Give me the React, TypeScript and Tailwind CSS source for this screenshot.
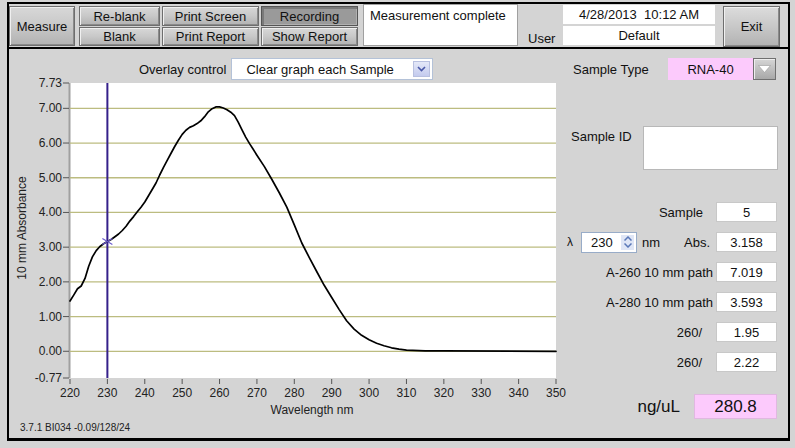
import React from "react";

const DATA: [number, number][] = [
  [220, 1.45], [221, 1.62], [222, 1.8], [223, 1.88], [224, 2.1], [225, 2.45], [226, 2.72], [227, 2.9],
  [228, 3.02], [229, 3.1], [230, 3.16], [231, 3.22], [232, 3.3], [233, 3.38], [234, 3.48], [235, 3.6],
  [236, 3.75], [237, 3.88], [238, 4.02], [239, 4.15], [240, 4.3], [241, 4.48], [242, 4.66], [243, 4.85],
  [244, 5.08], [245, 5.3], [246, 5.5], [247, 5.7], [248, 5.9], [249, 6.08], [250, 6.25], [251, 6.37],
  [252, 6.45], [253, 6.5], [254, 6.56], [255, 6.64], [256, 6.76], [257, 6.9], [258, 6.99], [259, 7.04],
  [260, 7.04], [261, 7.01], [262, 6.96], [263, 6.89], [264, 6.79], [265, 6.6], [266, 6.38], [267, 6.17],
  [268, 5.99], [269, 5.82], [270, 5.65], [272, 5.32], [274, 4.95], [276, 4.56], [278, 4.15], [280, 3.64],
  [282, 3.12], [284, 2.7], [286, 2.3], [288, 1.9], [290, 1.55], [292, 1.2], [294, 0.88], [296, 0.64],
  [298, 0.46], [300, 0.33], [302, 0.23], [304, 0.16], [306, 0.1], [308, 0.06], [310, 0.035], [315, 0.015],
  [320, 0.01], [350, 0.0],
];

const X0 = 61;
const X1 = 547;
const Y0 = 3;
const Y1 = 298;
const xs = (nm: number) => X0 + ((nm - 220) / 130) * (X1 - X0);
const ys = (a: number) => Y0 + ((7.73 - a) / 8.5) * (Y1 - Y0);

const FONT = "Liberation Sans, Arial, sans-serif";

function Chart() {
  const yTicks: [number, string][] = [
    [7.73, "7.73"], [7, "7.00"], [6, "6.00"], [5, "5.00"], [4, "4.00"], [3, "3.00"],
    [2, "2.00"], [1, "1.00"], [0, "0.00"], [-0.77, "-0.77"],
  ];
  const xTicks = [220, 230, 240, 250, 260, 270, 280, 290, 300, 310, 320, 330, 340, 350];
  const pts = DATA.map(([n, a]) => `${xs(n).toFixed(1)},${ys(a).toFixed(1)}`).join(" ");
  const cx = xs(230);
  const cy = ys(3.16);
  return (
    <svg width={551} height={338} viewBox="0 0 551 338" className="block overflow-visible">
      <rect x={X0} y={Y0} width={X1 - X0} height={Y1 - Y0} fill="#ffffff" />
      <line x1={X0 - 0.5} y1={Y0} x2={X0 - 0.5} y2={Y1} stroke="#a0a0a0" strokeWidth={2} />
      {[7, 6, 5, 4, 3, 2, 1, 0].map((a) => (
        <line key={a} x1={X0} y1={ys(a)} x2={X1} y2={ys(a)} stroke="#bcbc80" strokeWidth={1.3} />
      ))}
      {yTicks.map(([a, t]) => (
        <g key={t}>
          <line x1={X0 - 7} y1={ys(a)} x2={X0 - 1} y2={ys(a)} stroke="#555" strokeWidth={1} />
          <text x={X0 - 8} y={ys(a) + 4} textAnchor="end" fontSize={12} fontFamily={FONT} fill="#222">
            {t}
          </text>
        </g>
      ))}
      {xTicks.map((n) => (
        <g key={n}>
          <line x1={xs(n)} y1={Y1 + 1} x2={xs(n)} y2={Y1 + 6} stroke="#555" strokeWidth={1} />
          <text x={xs(n)} y={Y1 + 19} textAnchor="middle" fontSize={12} fontFamily={FONT} fill="#222">
            {n}
          </text>
        </g>
      ))}
      <text x={303} y={334} textAnchor="middle" fontSize={12} fontFamily={FONT} fill="#222">
        Wavelength nm
      </text>
      <text
        x={0}
        y={0}
        transform="translate(17,148) rotate(-90)"
        textAnchor="middle"
        fontSize={12}
        fontFamily={FONT}
        fill="#222"
      >
        10 mm Absorbance
      </text>
      <line x1={cx} y1={Y0} x2={cx} y2={Y1} stroke="#35208a" strokeWidth={2} />
      <polyline points={pts} fill="none" stroke="#000" strokeWidth={1.7} strokeLinejoin="round" strokeLinecap="round" />
      <line x1={cx - 5} y1={cy - 3} x2={cx + 5} y2={cy + 3} stroke="#6a5acd" strokeWidth={1.2} />
      <line x1={cx - 5} y1={cy + 3} x2={cx + 5} y2={cy - 3} stroke="#6a5acd" strokeWidth={1.2} />
    </svg>
  );
}

const btn =
  "flex items-center justify-center text-[13px] leading-none text-[#111] border border-[#6e6e6e] bg-linear-to-b from-[#d8d8d8] via-[#c8c8c8] to-[#b2b2b2] shadow-[inset_1px_1px_0_#f0f0f0,inset_-1px_-1px_0_#8a8a8a]";
const btnDown =
  "flex items-center justify-center text-[13px] leading-none text-[#111] border border-[#555] bg-[#9a9a9a] shadow-[inset_2px_2px_0_#7a7a7a,inset_-1px_-1px_0_#b0b0b0]";

function ValueBox({ v }: { v: string }) {
  return (
    <div className="w-[61px] h-[20px] bg-white border border-[#c8c8c8] flex items-center justify-center text-[13px] leading-none text-[#111]">
      {v}
    </div>
  );
}

export default function App() {
  return (
    <div className="w-[795px] h-[448px] bg-[#d4d4d4] pt-[2px] pl-[7px] overflow-hidden font-['Liberation_Sans',Arial,sans-serif] text-[#111]">
      <div className="w-[783px] flex flex-col">
        {/* Top bar */}
        <div className="h-[47px] border-2 border-black flex items-start">
          <div className={`${btn} mt-[2px] w-[66px] h-[40px] bg-linear-to-b from-[#d2d2d2] via-[#c4c4c4] to-[#a8a8a8]`}>Measure</div>
          <div className="ml-[4px] w-[81px] flex flex-col">
            <div className={`${btn} mt-[2px] h-[20px]`}>Re-blank</div>
            <div className={`${btn} mt-[1px] h-[19px]`}>Blank</div>
          </div>
          <div className="ml-[2px] w-[97px] flex flex-col">
            <div className={`${btn} mt-[2px] h-[20px]`}>Print Screen</div>
            <div className={`${btn} mt-[1px] h-[19px]`}>Print Report</div>
          </div>
          <div className="ml-[2px] w-[97px] flex flex-col">
            <div className={`${btnDown} mt-[2px] h-[20px]`}>Recording</div>
            <div className={`${btn} mt-[1px] h-[19px]`}>Show Report</div>
          </div>
          <div className="ml-[5px] w-[155px] h-[42px] bg-white border border-[#a0a0a0] pl-[6px] pt-[3px] text-[13px] leading-[15px]">
            Measurement complete
          </div>
          <div className="ml-[10px] w-[35px] h-[43px] flex items-end pb-[2px] text-[13px] leading-none">User</div>
          <div className="w-[152px] flex flex-col">
            <div className="mt-[1px] h-[19px] bg-white flex items-center justify-center text-[13px] leading-none">
              4/28/2013&nbsp;&nbsp;10:12 AM
            </div>
            <div className="mt-[2px] h-[19px] bg-white flex items-center justify-center text-[13px] leading-none">
              Default
            </div>
          </div>
          <div className={`${btn} ml-[8px] mt-[2px] w-[57px] h-[41px] bg-linear-to-b from-[#dcdcdc] via-[#c6c6c6] to-[#a4a4a4]`}>Exit</div>
        </div>

        {/* Main panel */}
        <div className="h-[392px] border-2 border-t-0 border-b-[3px] border-black flex">
          {/* Left column */}
          <div className="w-[551px] flex flex-col">
            <div className="h-[31px] pt-[9px] pl-[130px] flex items-start">
              <div className="h-[22px] flex items-center mr-[5px] text-[13px] leading-none">Overlay control</div>
              <div className="w-[202px] h-[22px] bg-white border border-[#b4c2d8] flex items-center justify-between">
                <span className="pl-[14px] text-[13px] leading-none">Clear graph each Sample</span>
                <div className="mr-[2px] w-[17px] h-[16px] bg-linear-to-b from-[#e4e8f8] to-[#c4cbee] border border-[#b8c0e0] flex items-center justify-center">
                  <svg width="9" height="6" viewBox="0 0 9 6">
                    <path d="M1 1 L4.5 4.5 L8 1" fill="none" stroke="#4a58a8" strokeWidth="1.6" />
                  </svg>
                </div>
              </div>
            </div>
            <Chart />
            <div className="h-[20px] pl-[11px] flex items-center text-[10px] leading-none text-[#222]">
              3.7.1 BI034 -0.09/128/24
            </div>
          </div>

          {/* Right column */}
          <div className="flex-1 flex flex-col">
            <div className="mt-[9px] h-[22px] flex items-center">
              <div className="pl-[13px] w-[108px] text-[13px] leading-none">Sample Type</div>
              <div className="w-[85px] h-full bg-[#fccafc] flex items-center justify-center text-[13px] leading-none">RNA-40</div>
              <div className="w-[23px] h-full border border-[#707070] bg-linear-to-b from-[#d6d6d6] to-[#a8a8a8] shadow-[inset_1px_1px_0_#eeeeee] flex items-center justify-center">
                <svg width="13" height="8" viewBox="0 0 13 8">
                  <path d="M0.5 0.5 L12.5 0.5 L6.5 7.5 Z" fill="#ffffff" stroke="#9a9a9a" strokeWidth="0.6" />
                </svg>
              </div>
            </div>

            <div className="mt-[46px] h-[44px] flex">
              <div className="pl-[11px] w-[83px] pt-[3px] text-[13px] leading-[15px]">Sample ID</div>
              <div className="w-[135px] h-full bg-white border border-[#b8b8b8]" />
            </div>

            <div className="mt-[32px] flex flex-col gap-[10px] pr-[11px]">
              <div className="h-[20px] flex items-center justify-end">
                <span className="mr-[13px] text-[13px] leading-none">Sample</span>
                <ValueBox v="5" />
              </div>
              <div className="h-[20px] flex items-center">
                <span className="pl-[7px] w-[21px] text-[12px] leading-none">λ</span>
                <div className="w-[56px] h-[21px] bg-white border border-[#98acc8] flex items-center justify-between">
                  <span className="pl-[9px] text-[13px] leading-none">230</span>
                  <div className="mr-[2px] w-[13px] h-[15px] bg-[#dfe6f6] flex flex-col items-center justify-center gap-[2px]">
                    <svg width="8" height="5" viewBox="0 0 8 5">
                      <path d="M0.5 4.5 L4 1 L7.5 4.5" fill="none" stroke="#5a78b8" strokeWidth="1.5" />
                    </svg>
                    <svg width="8" height="5" viewBox="0 0 8 5">
                      <path d="M0.5 0.5 L4 4 L7.5 0.5" fill="none" stroke="#5a78b8" strokeWidth="1.5" />
                    </svg>
                  </div>
                </div>
                <span className="ml-[5px] text-[13px] leading-none">nm</span>
                <span className="flex-1" />
                <span className="mr-[6px] text-[13px] leading-none">Abs.</span>
                <ValueBox v="3.158" />
              </div>
              <div className="h-[20px] flex items-center justify-end">
                <span className="mr-[3px] text-[13px] leading-none">A-260 10 mm path</span>
                <ValueBox v="7.019" />
              </div>
              <div className="h-[20px] flex items-center justify-end">
                <span className="mr-[3px] text-[13px] leading-none">A-280 10 mm path</span>
                <ValueBox v="3.593" />
              </div>
              <div className="h-[20px] flex items-center justify-end">
                <span className="mr-[14px] text-[13px] leading-none">260/</span>
                <ValueBox v="1.95" />
              </div>
              <div className="h-[20px] flex items-center justify-end">
                <span className="mr-[14px] text-[13px] leading-none">260/</span>
                <ValueBox v="2.22" />
              </div>
            </div>

            <div className="mt-[22px] h-[25px] pr-[11px] flex items-center justify-end">
              <span className="mr-[14px] text-[17px] leading-none">ng/uL</span>
              <div className="w-[83px] h-full bg-[#fccafc] border border-[#e0b8e0] flex items-center justify-center text-[17px] leading-none">
                280.8
              </div>
            </div>
          </div>
        </div>
      </div>
    </div>
  );
}
